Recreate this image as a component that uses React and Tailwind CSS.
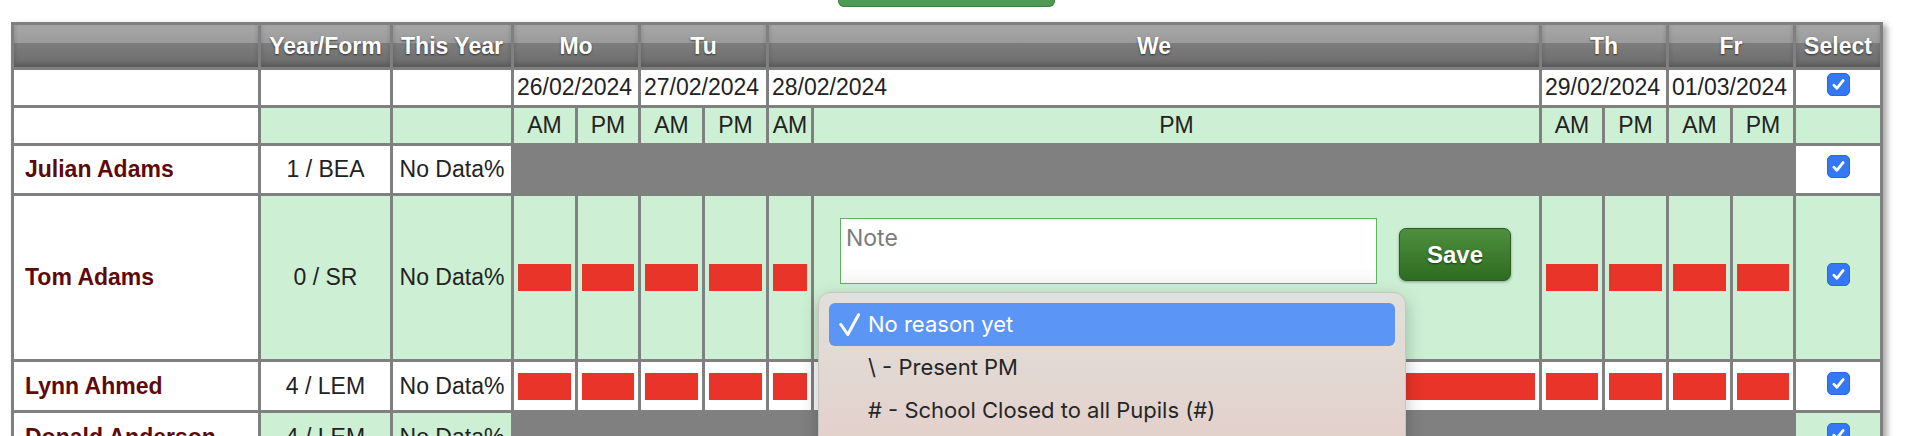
import React from 'react';

const sans = "font-['Liberation_Sans',Arial,sans-serif]";

const Check = () => (
  <span className="flex h-[23px] w-[23px] items-center justify-center rounded-[5px] border border-[#2a68dc] bg-[#3478f6]">
    <svg viewBox="0 0 16 16" className="h-[17px] w-[17px]">
      <path d="M3.6 8.6l2.9 3 5.9-7.4" fill="none" stroke="white" strokeWidth="2.6" strokeLinecap="round" strokeLinejoin="round" />
    </svg>
  </span>
);

const Head = ({ children, className = '' }) => (
  <div
    className={`flex items-center justify-center bg-[linear-gradient(to_bottom,#a7a7a7_0%,#9b9b9b_42%,#7d7d7d_44%,#6b6b6b_100%)] text-[23px] font-bold text-white shadow-[inset_0_-3px_5px_rgba(0,0,0,0.18)] [text-shadow:0_1px_2px_rgba(0,0,0,0.6)] ${className}`}
  >
    {children}
  </div>
);

const Bar = ({ bg }) => (
  <div className={`flex items-center px-[4px] ${bg}`}>
    <div className="h-[27px] w-full bg-[#e9342a]" />
  </div>
);

const NameCell = ({ name }) => (
  <div className="flex items-center bg-white pl-[11px] text-[23px] font-bold text-[#5e0a0a]">{name}</div>
);

const SelectCell = ({ bg }) => (
  <div className={`flex items-center justify-center pb-[6px] ${bg}`}>
    <Check />
  </div>
);

const InfoCells = ({ form, bg }) => (
  <>
    <div className={`flex items-center justify-center ${bg}`}>{form}</div>
    <div className={`flex items-center justify-center ${bg}`}>No Data%</div>
  </>
);

const reasons = ['No reason yet', '\\ - Present PM', '# - School Closed to all Pupils (#)', 'B - Educated off site (B)'];

const NoteCell = () => (
  <div className="relative flex items-start bg-[#cdf0d4] pl-[26px] pt-[22px]">
    <textarea
      placeholder="Note"
      className="h-[66px] w-[537px] resize-none border border-[#5cb35f] bg-[linear-gradient(to_bottom,#ffffff_75%,#f5f5f5)] px-[5px] pt-[2px] font-['Inter',sans-serif] text-[23px] outline-none placeholder:text-[#7c7c7c]"
    />
    <button className="ml-[22px] mt-[10px] h-[53px] w-[112px] rounded-[7px] border border-[#2a5c1f] bg-[linear-gradient(to_bottom,#4e8f3e,#2e6c21)] text-[24px] font-bold text-white shadow-[0_1px_3px_rgba(0,0,0,0.35)] [text-shadow:0_1px_2px_rgba(0,0,0,0.55)]">
      Save
    </button>
    <div className="absolute left-[4px] top-[96px] z-10 h-[190px] w-[588px] rounded-[12px] border border-[#c8c4be] bg-[linear-gradient(to_bottom,#e1e0da,#e4ccc7)] px-[10px] pt-[10px] font-['Inter',sans-serif] text-[22px] text-[#262626] shadow-[0_6px_18px_rgba(0,0,0,0.25)]">
      {reasons.map((r, i) => (
        <div
          key={r}
          className={`relative flex h-[43px] items-center pl-[39px] ${i === 0 ? 'rounded-[6px] bg-[#5b95f5] text-white' : ''}`}
        >
          {i === 0 && (
            <svg viewBox="0 0 21 23" className="absolute left-[10px] top-[10px] h-[23px] w-[21px]">
              <path d="M1.8 11.5l7 10L19.5 1.8" fill="none" stroke="white" strokeWidth="3" strokeLinecap="round" strokeLinejoin="round" />
            </svg>
          )}
          {r}
        </div>
      ))}
    </div>
  </div>
);

export default function App() {
  const green = 'bg-[#cdf0d4]';
  const dates = ['26/02/2024', '27/02/2024', '28/02/2024', '29/02/2024', '01/03/2024'];
  const halves = ['AM', 'PM', 'AM', 'PM', 'AM', 'PM', 'AM', 'PM', 'AM', 'PM'];

  return (
    <div className={`relative h-[436px] overflow-hidden bg-white ${sans}`}>
      <div className="ml-[838px] h-[7px] w-[217px] rounded-b-[6px] border border-t-0 border-[#3b7c40] bg-[#4f9a55]" />

      <div className="ml-[11px] mt-[15px] grid w-fit grid-cols-[244px_129px_118px_61px_60px_61px_61px_42px_725px_60px_61px_61px_60px_84px] grid-rows-[42px_35px_35px_47px_163px_48px_48px] gap-[3px] bg-[#808080] p-[3px] text-[23px] text-[#222] shadow-[4px_3px_6px_rgba(0,0,0,0.35)]">
        {/* header */}
        <Head />
        <Head>Year/Form</Head>
        <Head>This Year</Head>
        <Head className="col-span-2">Mo</Head>
        <Head className="col-span-2">Tu</Head>
        <Head className="col-span-2">We</Head>
        <Head className="col-span-2">Th</Head>
        <Head className="col-span-2">Fr</Head>
        <Head>Select</Head>

        {/* dates */}
        <div className="bg-white" />
        <div className="bg-white" />
        <div className="bg-white" />
        {dates.map((d) => (
          <div key={d} className="col-span-2 flex items-center bg-white pl-[3px]">{d}</div>
        ))}
        <SelectCell bg="bg-white" />

        {/* AM / PM */}
        <div className="bg-white" />
        <div className={green} />
        <div className={green} />
        {halves.map((h, i) => (
          <div key={i} className={`flex items-center justify-center ${green}`}>{h}</div>
        ))}
        <div className={green} />

        {/* Julian Adams */}
        <NameCell name="Julian Adams" />
        <InfoCells form="1 / BEA" bg="bg-white" />
        <div className="col-span-10 bg-[#808080]" />
        <SelectCell bg="bg-white" />

        {/* Tom Adams */}
        <NameCell name="Tom Adams" />
        <InfoCells form="0 / SR" bg={green} />
        <Bar bg={green} />
        <Bar bg={green} />
        <Bar bg={green} />
        <Bar bg={green} />
        <Bar bg={green} />
        <NoteCell />
        <Bar bg={green} />
        <Bar bg={green} />
        <Bar bg={green} />
        <Bar bg={green} />
        <SelectCell bg={green} />

        {/* Lynn Ahmed */}
        <NameCell name="Lynn Ahmed" />
        <InfoCells form="4 / LEM" bg="bg-white" />
        {halves.map((_, i) => (
          <Bar key={i} bg="bg-white" />
        ))}
        <SelectCell bg="bg-white" />

        {/* Donald Anderson */}
        <NameCell name="Donald Anderson" />
        <InfoCells form="4 / LEM" bg={green} />
        <div className="col-span-10 bg-[#808080]" />
        <SelectCell bg={green} />
      </div>
    </div>
  );
}
